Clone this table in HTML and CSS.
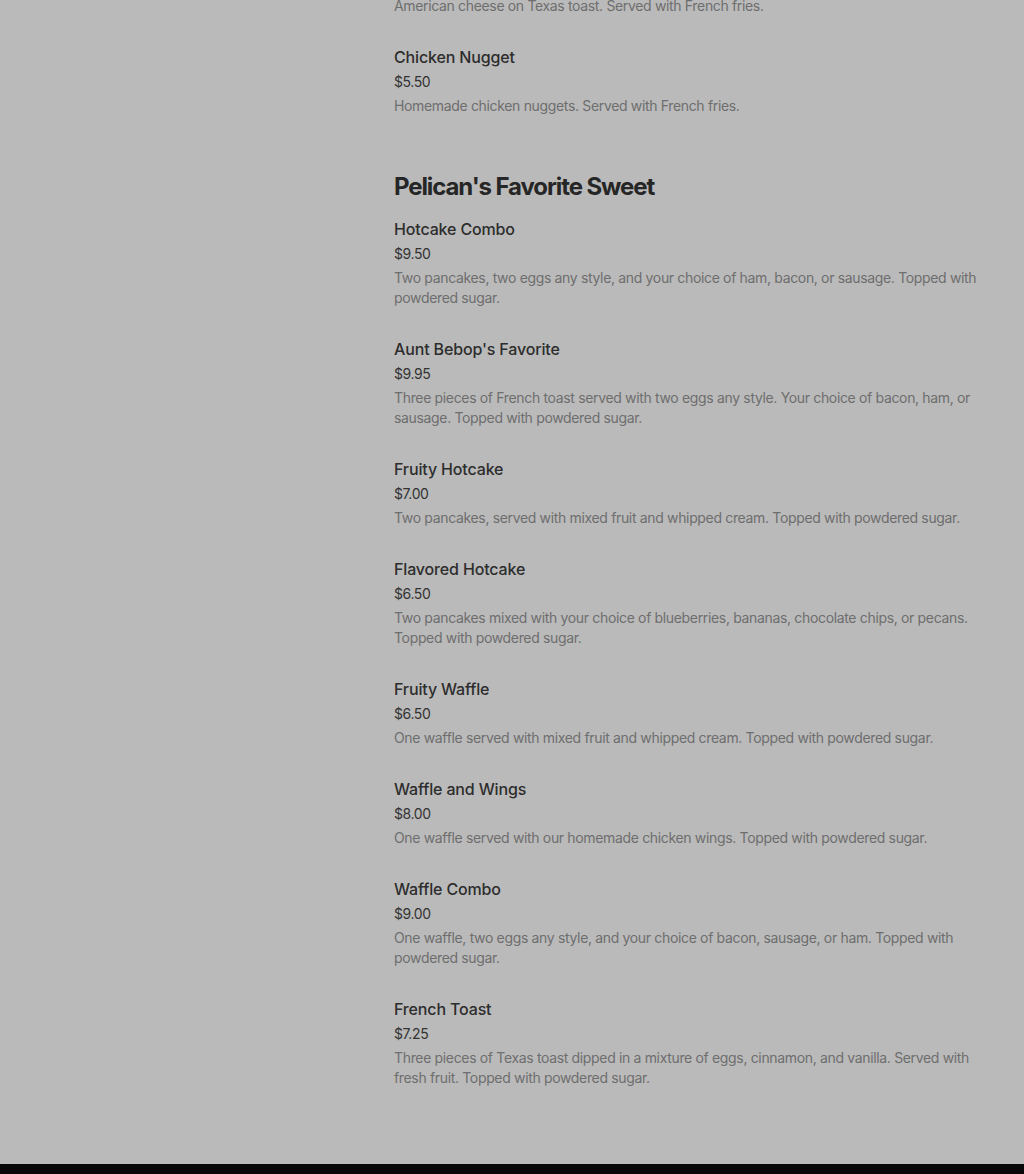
FILE: index.html
```html
<!DOCTYPE html>
<html>
  <head>
    <title>Pelican's Menu</title>
    <link rel="stylesheet" href="styles.css">
  </head>
  <body>
    <div class="page">
      <div class="menu">
        <section class="section">
          <div class="item first">
            <p class="desc">American cheese on Texas toast. Served with French fries.</p>
          </div>
          <div class="item">
            <h3 class="name">Chicken Nugget</h3>
            <div class="price">$5.50</div>
            <p class="desc">Homemade chicken nuggets. Served with French fries.</p>
          </div>
        </section>

        <section class="section">
          <h2 class="section-title">Pelican's Favorite Sweet</h2>
          <div class="item">
            <h3 class="name">Hotcake Combo</h3>
            <div class="price">$9.50</div>
            <p class="desc">Two pancakes, two eggs any style, and your choice of ham, bacon, or sausage. Topped with powdered sugar.</p>
          </div>
          <div class="item">
            <h3 class="name">Aunt Bebop's Favorite</h3>
            <div class="price">$9.95</div>
            <p class="desc">Three pieces of French toast served with two eggs any style. Your choice of bacon, ham, or sausage. Topped with powdered sugar.</p>
          </div>
          <div class="item">
            <h3 class="name">Fruity Hotcake</h3>
            <div class="price">$7.00</div>
            <p class="desc">Two pancakes, served with mixed fruit and whipped cream. Topped with powdered sugar.</p>
          </div>
          <div class="item">
            <h3 class="name">Flavored Hotcake</h3>
            <div class="price">$6.50</div>
            <p class="desc">Two pancakes mixed with your choice of blueberries, bananas, chocolate chips, or pecans. Topped with powdered sugar.</p>
          </div>
          <div class="item">
            <h3 class="name">Fruity Waffle</h3>
            <div class="price">$6.50</div>
            <p class="desc">One waffle served with mixed fruit and whipped cream. Topped with powdered sugar.</p>
          </div>
          <div class="item">
            <h3 class="name">Waffle and Wings</h3>
            <div class="price">$8.00</div>
            <p class="desc">One waffle served with our homemade chicken wings. Topped with powdered sugar.</p>
          </div>
          <div class="item">
            <h3 class="name">Waffle Combo</h3>
            <div class="price">$9.00</div>
            <p class="desc">One waffle, two eggs any style, and your choice of bacon, sausage, or ham. Topped with powdered sugar.</p>
          </div>
          <div class="item">
            <h3 class="name">French Toast</h3>
            <div class="price">$7.25</div>
            <p class="desc">Three pieces of Texas toast dipped in a mixture of eggs, cinnamon, and vanilla. Served with fresh fruit. Topped with powdered sugar.</p>
          </div>
        </section>
      </div>
    </div>
    <footer class="footer"></footer>
  </body>
</html>
```

FILE: styles.css
```css
html, body {
  margin: 0;
  padding: 0;
  background-color: #bababa;
  font-family: Inter, "Noto Sans", Arial, sans-serif;
}
.page {
  display: flex;
  padding-left: 394px;
  padding-bottom: 76px;
}
.menu {
  width: 590px;
  margin-top: -4px;
}
.section {
  margin-bottom: 55px;
}
.section:last-child {
  margin-bottom: 0;
}
.section-title {
  margin: 0 0 14px;
  font-size: 24px;
  line-height: 32px;
  font-weight: 700;
  letter-spacing: -1.1px;
  color: #262626;
}
.item {
  padding-bottom: 29px;
}
.item:last-child {
  padding-bottom: 0;
}
.name {
  margin: 0;
  font-size: 16px;
  line-height: 24px;
  font-weight: 500;
  letter-spacing: -0.15px;
  color: #2d2d2d;
}
.price {
  margin-top: 3px;
  font-size: 14px;
  line-height: 20px;
  letter-spacing: -0.4px;
  color: #333333;
}
.desc {
  margin: 4px 0 0;
  font-size: 14px;
  line-height: 20px;
  letter-spacing: -0.34px;
  color: #6e6e6e;
}
.item.first .desc {
  margin-top: 0;
}
.footer {
  height: 40px;
  background-color: #080808;
}
```
